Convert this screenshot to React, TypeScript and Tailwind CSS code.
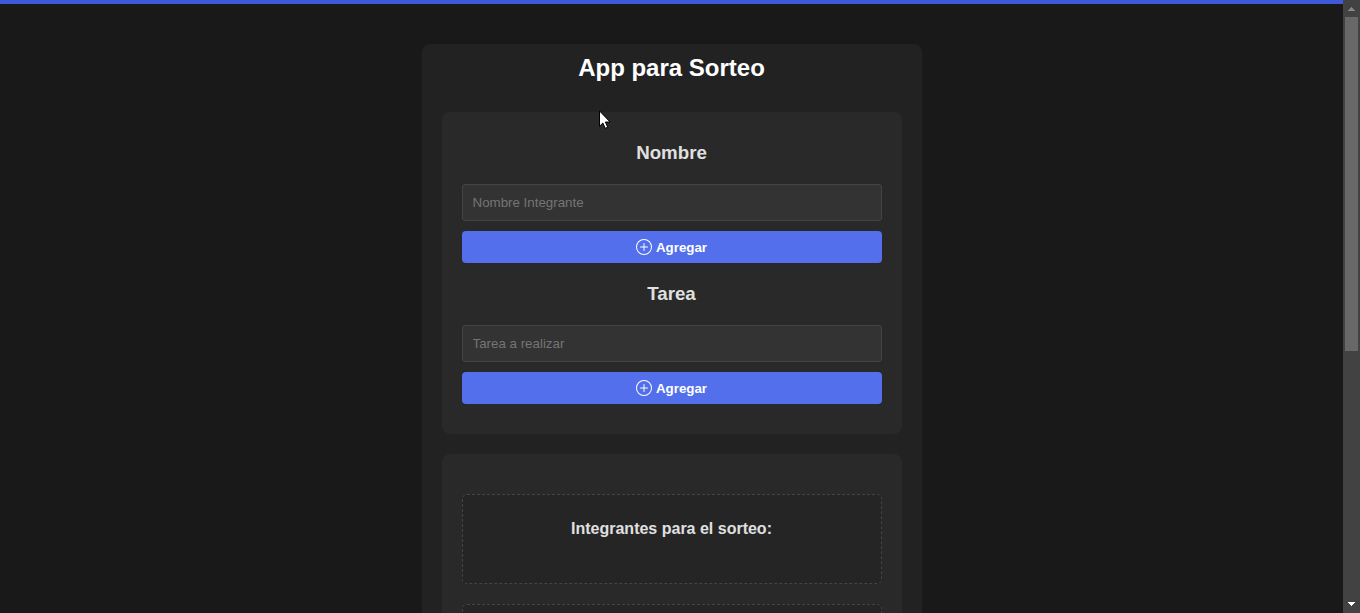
function PlusCircle() {
  return (
    <svg viewBox="0 0 16 16" className="size-4" fill="currentColor" aria-hidden="true">
      <path d="M8 15A7 7 0 1 1 8 1a7 7 0 0 1 0 14m0 1A8 8 0 1 0 8 0a8 8 0 0 0 0 16" />
      <path d="M8 4a.5.5 0 0 1 .5.5v3h3a.5.5 0 0 1 0 1h-3v3a.5.5 0 0 1-1 0v-3h-3a.5.5 0 0 1 0-1h3v-3A.5.5 0 0 1 8 4" />
    </svg>
  );
}

function Field({ title, placeholder }: { title: string; placeholder: string }) {
  return (
    <section className="flex flex-col">
      <h3 className="text-center text-[18.72px] leading-[22px] font-bold text-[#e0e0e0]">{title}</h3>
      <input
        type="text"
        placeholder={placeholder}
        className="mt-5 h-[37px] w-full rounded-[3px] border border-[#444] bg-[#333] px-2.5 text-[13.333px] text-white outline-none placeholder:text-[#757575]"
      />
      <button className="mt-2.5 flex h-8 items-center justify-center gap-1 rounded-[4px] bg-[#536fec] text-[13.333px] leading-4 font-bold text-white">
        <PlusCircle />
        <span className="pt-0.5">Agregar</span>
      </button>
    </section>
  );
}

function ResultList({ title }: { title?: string }) {
  return (
    <div className="h-[90px] shrink-0 rounded-[5px] border border-dashed border-[#444] bg-[#252525] pt-[25px]">
      {title && <h4 className="text-center text-base leading-[18px] font-bold text-[#e0e0e0]">{title}</h4>}
    </div>
  );
}

function Scrollbar() {
  return (
    <div className="flex w-[17px] shrink-0 flex-col items-center bg-[#424242]">
      <svg viewBox="0 0 17 17" className="size-[17px] shrink-0" shapeRendering="crispEdges" fill="#868686">
        <path d="M8 7h1v1h1v1h1v1h1v1H5v-1h1V9h1V8h1z" />
      </svg>
      <div className="h-[334px] w-[13px] shrink-0 bg-[#686868]" />
      <svg viewBox="0 0 17 17" className="mt-auto size-[17px] shrink-0" shapeRendering="crispEdges" fill="#fff">
        <path d="M5 6h7v1h-1v1h-1v1H9v1H8V9H7V8H6V7H5z" />
      </svg>
    </div>
  );
}

function Cursor() {
  return (
    <svg
      viewBox="0 0 12 19"
      className="pointer-events-none absolute top-[110px] left-[599px] h-[19px] w-3"
    >
      <path
        d="M.5 .9v15.4l3.4-3.3 2.3 5.3 2.5-1.1-2.3-5.2h4.7z"
        fill="#fff"
        stroke="#000"
        strokeWidth="1"
      />
    </svg>
  );
}

export default function App() {
  return (
    <div className="relative flex h-[613px] overflow-hidden bg-[#191919] font-['Liberation_Sans',Arial,sans-serif]">
      <main className="flex flex-1 flex-col items-center border-t-4 border-[#3f5ad8]">
        <div className="mt-10 flex w-[500px] shrink-0 flex-col gap-5 rounded-lg bg-[#222] px-5 pt-2.5">
          <h1 className="mb-2.5 text-center text-2xl leading-7 font-bold text-white">App para Sorteo</h1>
          <div className="flex h-[322px] flex-col gap-5 rounded-lg bg-[#292929] px-5 pt-[30px]">
            <Field title="Nombre" placeholder="Nombre Integrante" />
            <Field title="Tarea" placeholder="Tarea a realizar" />
          </div>
          <div className="flex flex-col gap-5 rounded-lg bg-[#292929] px-5 py-10">
            <ResultList title="Integrantes para el sorteo:" />
            <ResultList />
          </div>
        </div>
      </main>
      <Scrollbar />
      <Cursor />
    </div>
  );
}
